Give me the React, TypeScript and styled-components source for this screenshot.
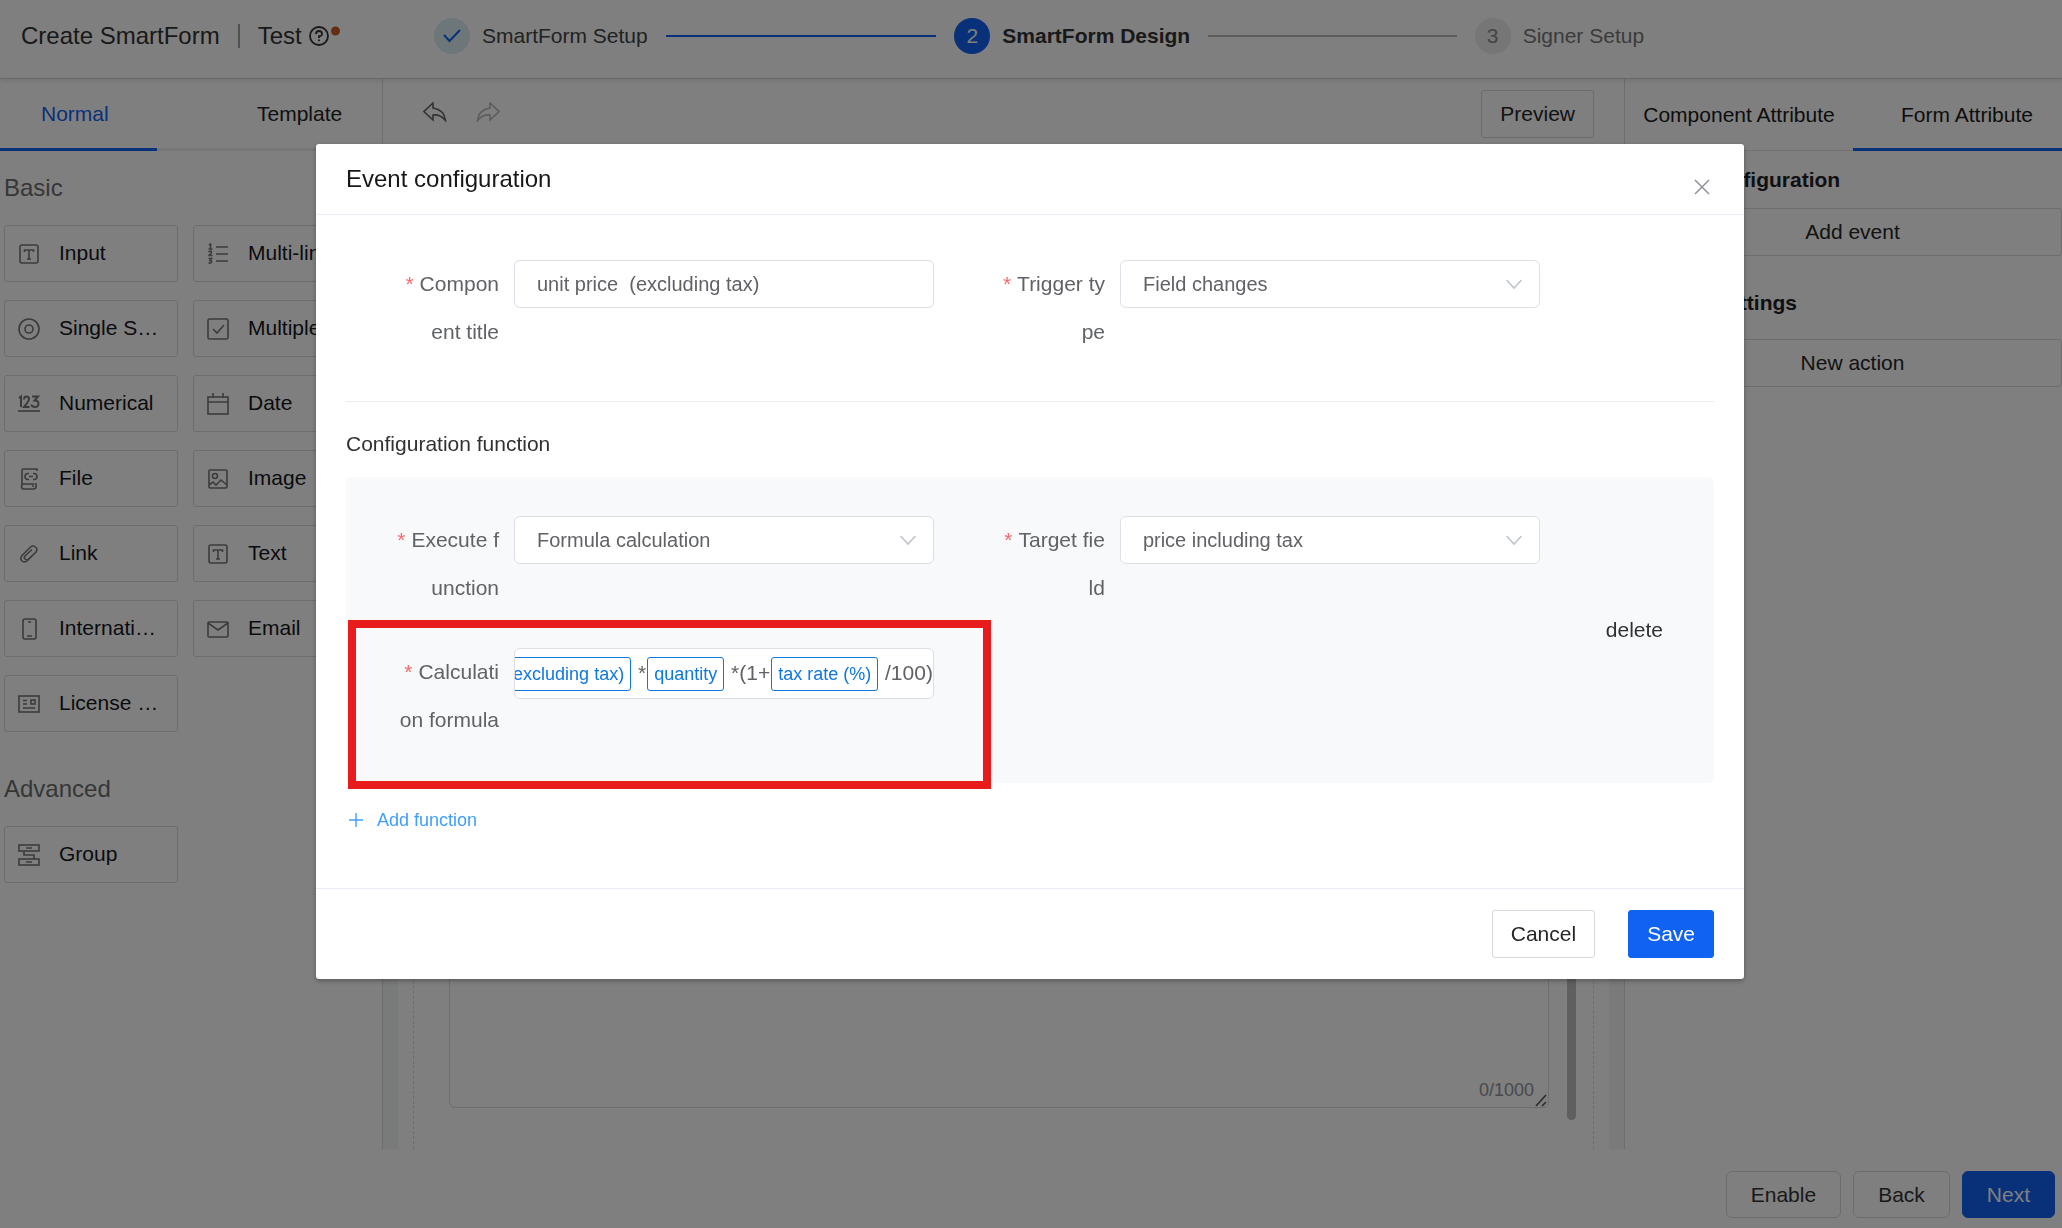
import React from "react";
import styled, { createGlobalStyle } from "styled-components";

const GlobalStyle = createGlobalStyle`
  *, *::before, *::after { box-sizing: border-box; }
  body {
    margin: 0;
    background: #fff;
    color: #1f2126;
    font-family: "Liberation Sans", Arial, sans-serif;
    font-size: 21px;
    overflow: hidden;
  }
  button, input, select, textarea { font: inherit; color: inherit; margin: 0; }
  h1, h2, h3, p { margin: 0; font-weight: 400; }
`;

const Page = styled.div`
  display: flex;
  flex-direction: column;
  height: 100vh;
  overflow: hidden;
`;

/* ---------- header ---------- */
const Header = styled.header`
  display: flex;
  align-items: center;
  height: 79px;
  padding-bottom: 6px;
  border-bottom: 1px solid #cfcfcf;
  box-shadow: 0 2px 6px rgba(0, 0, 0, 0.1);
  flex: none;
  position: relative;
`;

const Brand = styled.div`
  display: flex;
  align-items: center;
  width: 434px;
  padding-left: 21px;
  font-size: 24px;
  line-height: 28px;
  color: #333;
`;

const BrandTitle = styled.h1`
  font-size: 24px;
`;

const BrandDivider = styled.span`
  width: 2px;
  height: 24px;
  margin: 0 18px;
  background: #a0a0a0;
`;

const Help = styled.button`
  display: flex;
  margin-left: 6px;
  padding: 0;
  border: 0;
  background: none;
  color: #333;
`;

const Steps = styled.ol`
  display: grid;
  grid-template-columns: repeat(3, 1fr);
  flex: 1;
  margin: 0;
  padding: 0 67px 0 0;
  list-style: none;
`;

type StepState = "done" | "active" | "wait";

const stepColors = {
  done: { bg: "#dbeff5", fg: "#1062f2", text: "#444", line: "#1062f2" },
  active: { bg: "#1062f2", fg: "#fff", text: "#333", line: "#b8b8b8" },
  wait: { bg: "#ececec", fg: "#8a8a8a", text: "#777", line: "transparent" },
};

const StepItem = styled.li<{ $state: StepState }>`
  display: flex;
  align-items: center;
  min-width: 0;
  white-space: nowrap;
  color: ${(p) => stepColors[p.$state].text};
  font-weight: ${(p) => (p.$state === "active" ? 700 : 400)};
  &::after {
    content: "";
    flex: 1;
    height: 2px;
    margin: 0 18px;
    background: ${(p) => stepColors[p.$state].line};
  }
`;

const StepCircle = styled.span<{ $state: StepState }>`
  display: flex;
  align-items: center;
  justify-content: center;
  width: 36px;
  height: 36px;
  margin-right: 12px;
  border-radius: 50%;
  font-weight: 400;
  background: ${(p) => stepColors[p.$state].bg};
  color: ${(p) => stepColors[p.$state].fg};
`;

/* ---------- workspace ---------- */
const Workspace = styled.div`
  display: flex;
  flex: 1;
  min-height: 0;
`;

const Sidebar = styled.aside`
  width: 383px;
  flex: none;
  border-right: 1px solid #dcdcdc;
`;

const TabBar = styled.div`
  display: flex;
  height: 72px;
  overflow: hidden;
`;

const LeftTab = styled.button<{ $active?: boolean }>`
  flex: ${(p) => (p.$active ? "0 0 157px" : "1")};
  padding: 1px 0 0 ${(p) => (p.$active ? "41px" : "100px")};
  text-align: left;
  border: 0;
  border-bottom: 3px solid ${(p) => (p.$active ? "#1062f2" : "#ececec")};
  background: none;
  color: ${(p) => (p.$active ? "#1062f2" : "#222")};
`;

const Palette = styled.section`
  padding: 23px 15px 20px 4px;
`;

const PaletteTitle = styled.h2`
  margin-bottom: 23px;
  font-size: 24px;
  line-height: 28px;
  color: #6b6f6e;
`;

const PaletteGrid = styled.div`
  display: grid;
  grid-template-columns: 1fr 1fr;
  gap: 18px 15px;
`;

const PaletteCard = styled.button`
  display: flex;
  align-items: center;
  gap: 19px;
  min-width: 0;
  height: 57px;
  padding: 0 14px 0 13px;
  border: 1px solid #dadada;
  border-radius: 3px;
  background: #fff;
  color: #15171c;
  text-align: left;
  svg { flex: none; color: #777; }
`;

const CardLabel = styled.span`
  padding-bottom: 2px;
  overflow: hidden;
  text-overflow: ellipsis;
  white-space: nowrap;
`;

const Center = styled.main`
  display: flex;
  flex-direction: column;
  flex: 1;
  min-width: 0;
`;

const Toolbar = styled.div`
  display: flex;
  align-items: center;
  height: 70px;
  padding: 0 30px 0 40px;
`;

const ToolButton = styled.button<{ $dim?: boolean }>`
  display: flex;
  margin-right: 29px;
  padding: 0 0 4px;
  border: 0;
  background: none;
  color: ${(p) => (p.$dim ? "#b8b8b8" : "#666")};
`;

const PlainButton = styled.button<{ $push?: boolean }>`
  height: 48px;
  margin-left: ${(p) => (p.$push ? "auto" : "0")};
  padding: 0 18px;
  border: 1px solid #d6d9e0;
  border-radius: 3px;
  background: #fff;
  color: #262626;
`;

const PrimaryButton = styled(PlainButton)`
  border-color: #1062f2;
  background: #1062f2;
  color: #fff;
`;

const Canvas = styled.div`
  display: flex;
  flex: 1;
  min-height: 0;
  padding: 0 15px;
  background: #f1f6f4;
`;

const Sheet = styled.div`
  display: flex;
  flex: 1;
  padding: 0 15px;
  background: #fff;
`;

const DropZone = styled.div`
  display: flex;
  flex: 1;
  gap: 18px;
  padding: 0 17px 0 35px;
  border: dashed #dadada;
  border-width: 0 1px;
`;

const TextAreaWrap = styled.label`
  position: relative;
  flex: 1;
  margin-bottom: 41px;
`;

const TextArea = styled.textarea`
  display: block;
  width: 100%;
  height: 100%;
  resize: none;
  border: 1px solid #dcdcdc;
  border-radius: 6px;
  background: #fff;
`;

const Counter = styled.span`
  position: absolute;
  right: 15px;
  bottom: 8px;
  font-size: 18px;
  line-height: 20px;
  color: #909399;
`;

const Grip = styled.svg`
  position: absolute;
  right: 1px;
  bottom: 1px;
`;

const ScrollThumb = styled.div`
  width: 9px;
  margin-bottom: 29px;
  border-radius: 5px;
  background: #bdbfc3;
`;

const Attributes = styled.aside`
  width: 438px;
  flex: none;
  border-left: 1px solid #dcdcdc;
  overflow: hidden;
`;

const RightTab = styled.button<{ $active?: boolean }>`
  flex: 0 0 228px;
  padding: ${(p) => (p.$active ? "3px" : "1px")} 0 0;
  border: 0;
  border-bottom: ${(p) => (p.$active ? "3px solid #1062f2" : "1px solid #e4e4e4")};
  background: none;
  color: #1a1a1a;
`;

const AttributeGroup = styled.section<{ $wide?: boolean }>`
  display: flex;
  flex-direction: column;
  gap: ${(p) => (p.$wide ? "21px" : "13px")};
  padding: ${(p) => (p.$wide ? "32px" : "14px")} 0 0 18px;
`;

const AttributeTitle = styled.h3`
  font-size: 21px;
  line-height: 30px;
  font-weight: 700;
`;

const Footer = styled.footer`
  display: flex;
  justify-content: flex-end;
  gap: 12px;
  flex: none;
  padding: 21px 7px 10px;
  border-top: 1px solid #fafafa;
`;

const FooterButton = styled.button<{ $primary?: boolean }>`
  height: 47px;
  padding: 0 24px;
  border: 1px solid ${(p) => (p.$primary ? "#1062f2" : "#d9d9d9")};
  border-radius: 6px;
  background: ${(p) => (p.$primary ? "#1062f2" : "#fff")};
  color: ${(p) => (p.$primary ? "#fff" : "#333")};
`;

/* ---------- dialog ---------- */
const Backdrop = styled.div`
  position: fixed;
  inset: 0;
  padding: 144px 32px 0 30px;
  background: rgba(0, 0, 0, 0.5);
  overflow: auto;
`;

const Dialog = styled.div`
  max-width: 1428px;
  margin: 0 auto;
  border-radius: 3px;
  background: #fff;
  box-shadow: 0 2px 5px rgba(0, 0, 0, 0.3);
`;

const DialogHeader = styled.div`
  display: flex;
  align-items: center;
  justify-content: space-between;
  height: 71px;
  padding: 0 32px 0 30px;
  border-bottom: 1px solid #e8eef4;
`;

const DialogTitle = styled.h2`
  font-size: 24px;
  color: #17181a;
`;

const CloseButton = styled.button`
  display: flex;
  padding: 16px 0 0;
  border: 0;
  background: none;
  color: #909399;
`;

const DialogBody = styled.div`
  padding: 45px 30px 56px;
`;

const FieldGrid = styled.div`
  display: grid;
  grid-template-columns: 1fr 1fr;
  gap: 36px 66px;
  flex: 1;
`;

const TriggerFields = styled.div`
  display: flex;
  padding: 0 174px 45px 48px;
  border-bottom: 1px solid #ebedf0;
`;

const Field = styled.div`
  position: relative;
  display: flex;
  align-items: flex-start;
  min-width: 0;
`;

const FieldLabel = styled.label`
  flex: 0 0 120px;
  padding-right: 15px;
  line-height: 48px;
  text-align: right;
  word-break: break-all;
  color: #606266;
  &::before {
    content: "*";
    margin-right: 6px;
    color: #f56c6c;
  }
`;

const TextInput = styled.input`
  flex: 1;
  min-width: 0;
  height: 48px;
  padding: 0 22px;
  border: 1px solid #dcdfe6;
  border-radius: 6px;
  background: #fff;
  font-size: 20px;
  color: #606266;
`;

const SelectWrap = styled.div`
  position: relative;
  display: flex;
  flex: 1;
  min-width: 0;
`;

const SelectBox = styled.select`
  width: 100%;
  height: 48px;
  padding: 0 44px 0 22px;
  appearance: none;
  border: 1px solid #dcdfe6;
  border-radius: 6px;
  background: #fff;
  font-size: 20px;
  color: #606266;
`;

const Chevron = styled.svg`
  position: absolute;
  right: 17px;
  top: 19px;
  pointer-events: none;
`;

const SectionTitle = styled.h3`
  margin: 30px 0 21px;
  font-size: 21px;
  line-height: 24px;
  color: #303133;
`;

const FunctionPanel = styled.div`
  display: flex;
  align-items: center;
  gap: 66px;
  padding: 39px 51px 39px 48px;
  border-radius: 6px;
  background: #f8f9fb;
`;

const DeleteButton = styled.button`
  padding: 0;
  border: 0;
  background: none;
  color: #303133;
`;

const FormulaBox = styled.div`
  display: flex;
  align-items: center;
  justify-content: flex-end;
  flex: 1;
  min-width: 0;
  height: 51px;
  border: 1px solid #dcdfe6;
  border-radius: 6px;
  background: #fff;
  color: #606266;
  white-space: pre;
  overflow: hidden;
`;

const Operator = styled.span`
  padding-bottom: 2px;
`;

const Token = styled.span`
  flex: none;
  height: 34px;
  margin: 0 1px;
  padding: 0 6px;
  border: 1px solid #0e78e0;
  border-radius: 3px;
  font-size: 18px;
  line-height: 32px;
  color: #0e78e0;
`;

const Highlight = styled.div`
  position: absolute;
  inset: -28px -57px -45px -46px;
  border: 8px solid #e81c1c;
  pointer-events: none;
`;

const AddFunction = styled.button`
  display: flex;
  align-items: center;
  gap: 14px;
  margin-top: 25px;
  padding: 0 0 0 3px;
  border: 0;
  background: none;
  font-size: 18px;
  line-height: 24px;
  color: #409eff;
`;

const DialogFooter = styled.div`
  display: flex;
  justify-content: flex-end;
  gap: 33px;
  padding: 21px 30px;
  border-top: 1px solid #e6ebf5;
`;

/* ---------- icons ---------- */
const icons: Record<string, React.ReactNode> = {
  text: (
    <>
      <rect x="2" y="2" width="18" height="18" rx="2" />
      <path d="M6.500 9V7h9v2M11 7v9M9 16h4" />
    </>
  ),
  list: (
    <>
      <path d="M9 4h12M9 11h12M9 18h12" />
      <path d="M2 2l1.500-1v5M1.500 6h4M1.500 9q3-2 3 0t-3 3.500h4M1.500 15.500h3l-1.500 2q2 0 1.500 1.500t-3 1" />
    </>
  ),
  radio: (
    <>
      <circle cx="11" cy="11" r="10" />
      <circle cx="11" cy="11" r="4" />
    </>
  ),
  check: (
    <>
      <rect x="1" y="1" width="20" height="20" rx="1.500" />
      <path d="M6 11l4 4 7-8" />
    </>
  ),
  number: (
    <>
      <path d="M1 5l2-1.500V14M6 6.500q0-3 2.500-3T11 6q0 2-5 8h5.500M14 3.500h6l-3.500 4q4 0 4 3.300t-3.500 3.200-3.500-2.500" strokeWidth="2" />
      <path d="M0 18h22" />
    </>
  ),
  date: (
    <>
      <rect x="1" y="4" width="20" height="17" />
      <path d="M1 9h20M6 0v5M16 0v5" />
    </>
  ),
  file: (
    <>
      <path d="M4 16V2.500Q4 1 5.500 1H19v2M18 15v3.500q0 2.500-2.500 2.500H6q-2.500 0-2.500-2.500T6 16h10.500M14 18h2" />
      <path d="M11 5.500H10a3 3 0 000 6h1M15 5.500h1a3 3 0 010 6h-1M11 8.500h4" />
    </>
  ),
  image: (
    <>
      <rect x="2" y="2" width="18" height="18" rx="1" />
      <circle cx="8" cy="8" r="2.500" />
      <path d="M2 17l4-3 3 3 5-5 6 5" />
    </>
  ),
  link: <path d="M17 10l-7.500 7.500q-3 2.500-5.500.5t0-5.500L12.500 4q2.500-2 5 0t.5 5l-8 7.500q-1.500 1-3-.500t0-3L14 6.500" />,
  phone: (
    <>
      <rect x="5" y="1" width="13" height="20" rx="2" />
      <path d="M10 4h3M9 18h5" />
    </>
  ),
  mail: (
    <>
      <rect x="1" y="4" width="20" height="15" rx="1" />
      <path d="M1 5l10 7 10-7" />
    </>
  ),
  card: (
    <>
      <rect x="1" y="3" width="20" height="16" />
      <rect x="13" y="7" width="4" height="4" />
      <path d="M5 7.500h4M5 11h4M5 15h12" />
    </>
  ),
  group: (
    <>
      <rect x="1" y="1" width="20" height="6" />
      <rect x="1" y="15" width="20" height="6" />
      <path d="M8 4h6M8 18h6M6 7v4h10v4" />
    </>
  ),
};

const Icon = ({ name }: { name: string }) => (
  <svg width="22" height="22" viewBox="0 0 22 22" fill="none" stroke="currentColor" strokeWidth="1.6" aria-hidden="true">
    {icons[name]}
  </svg>
);

const basicItems = [
  ["text", "Input"],
  ["list", "Multi-line"],
  ["radio", "Single Selection"],
  ["check", "Multiple"],
  ["number", "Numerical"],
  ["date", "Date"],
  ["file", "File"],
  ["image", "Image"],
  ["link", "Link"],
  ["text", "Text"],
  ["phone", "International"],
  ["mail", "Email"],
  ["card", "License plate"],
];

const PaletteSection = ({ title, items }: { title: string; items: string[][] }) => (
  <Palette>
    <PaletteTitle>{title}</PaletteTitle>
    <PaletteGrid>
      {items.map(([icon, label]) => (
        <PaletteCard key={label} type="button">
          <Icon name={icon} />
          <CardLabel>{label}</CardLabel>
        </PaletteCard>
      ))}
    </PaletteGrid>
  </Palette>
);

const SelectField = ({ id, label, value }: { id: string; label: string; value: string }) => (
  <Field>
    <FieldLabel htmlFor={id}>{label}</FieldLabel>
    <SelectWrap>
      <SelectBox id={id} defaultValue={value}>
        <option>{value}</option>
      </SelectBox>
      <Chevron width="18" height="11" viewBox="0 0 18 11" fill="none" stroke="#c0c4cc" strokeWidth="1.6" aria-hidden="true">
        <path d="M1.500 1l7.500 8 7.500-8" />
      </Chevron>
    </SelectWrap>
  </Field>
);

export default function App() {
  return (
    <>
      <GlobalStyle />
      <Page>
        <Header>
          <Brand>
            <BrandTitle>Create SmartForm</BrandTitle>
            <BrandDivider />
            <span>Test</span>
            <Help type="button" aria-label="Help">
              <svg width="33" height="22" viewBox="0 0 33 22" fill="none" stroke="currentColor" strokeWidth="1.8">
                <circle cx="11" cy="11" r="9" />
                <path d="M8 9q0-3 3-3t3 2.700-3 2.500v1.800M11 14.500v1.800" />
                <circle cx="27.500" cy="6" r="4.500" fill="#c4601c" stroke="none" />
              </svg>
            </Help>
          </Brand>
          <Steps>
            <StepItem $state="done">
              <StepCircle $state="done">
                <svg width="18" height="14" viewBox="0 0 18 14" fill="none" stroke="currentColor" strokeWidth="2" aria-label="Done">
                  <path d="M1 6l5.500 6L17 1" />
                </svg>
              </StepCircle>
              SmartForm Setup
            </StepItem>
            <StepItem $state="active">
              <StepCircle $state="active">2</StepCircle>
              SmartForm Design
            </StepItem>
            <StepItem $state="wait">
              <StepCircle $state="wait">3</StepCircle>
              Signer Setup
            </StepItem>
          </Steps>
        </Header>

        <Workspace>
          <Sidebar>
            <TabBar>
              <LeftTab type="button" $active>Normal</LeftTab>
              <LeftTab type="button">Template</LeftTab>
            </TabBar>
            <PaletteSection title="Basic" items={basicItems} />
            <PaletteSection title="Advanced" items={[["group", "Group"]]} />
          </Sidebar>

          <Center>
            <Toolbar>
              <ToolButton type="button" aria-label="Undo">
                <svg width="24" height="20" viewBox="0 0 24 20" fill="none" stroke="currentColor" strokeWidth="1.6">
                  <path d="M10 1L1 9.500l9 8.500v-5q7-1 12.500 5.500Q21.500 8 10 6z" />
                </svg>
              </ToolButton>
              <ToolButton type="button" aria-label="Redo" $dim>
                <svg width="24" height="20" viewBox="0 0 24 20" fill="none" stroke="currentColor" strokeWidth="1.6">
                  <path d="M14 1l9 8.500-9 8.500v-5q-7-1-12.500 5.500Q2.500 8 14 6z" />
                </svg>
              </ToolButton>
              <PlainButton type="button" $push>Preview</PlainButton>
            </Toolbar>
            <Canvas>
              <Sheet>
                <DropZone>
                  <TextAreaWrap>
                    <TextArea aria-label="Multi-line text" />
                    <Counter>0/1000</Counter>
                    <Grip width="13" height="13" viewBox="0 0 13 13" fill="none" stroke="#555" strokeWidth="1.6" aria-hidden="true">
                      <path d="M1 12L11 1M7 12l4-4" />
                    </Grip>
                  </TextAreaWrap>
                  <ScrollThumb />
                </DropZone>
              </Sheet>
            </Canvas>
          </Center>

          <Attributes>
            <TabBar>
              <RightTab type="button">Component Attribute</RightTab>
              <RightTab type="button" $active>Form Attribute</RightTab>
            </TabBar>
            <AttributeGroup>
              <AttributeTitle>Event configuration</AttributeTitle>
              <PlainButton type="button">Add event</PlainButton>
            </AttributeGroup>
            <AttributeGroup $wide>
              <AttributeTitle>Button settings</AttributeTitle>
              <PlainButton type="button">New action</PlainButton>
            </AttributeGroup>
          </Attributes>
        </Workspace>

        <Footer>
          <FooterButton type="button">Enable</FooterButton>
          <FooterButton type="button">Back</FooterButton>
          <FooterButton type="button" $primary>Next</FooterButton>
        </Footer>
      </Page>

      <Backdrop>
        <Dialog role="dialog" aria-modal="true" aria-labelledby="dialog-title">
          <DialogHeader>
            <DialogTitle id="dialog-title">Event configuration</DialogTitle>
            <CloseButton type="button" aria-label="Close">
              <svg width="20" height="20" viewBox="0 0 20 20" fill="none" stroke="currentColor" strokeWidth="1.5">
                <path d="M3 3l14 14M17 3L3 17" />
              </svg>
            </CloseButton>
          </DialogHeader>

          <DialogBody>
            <TriggerFields>
              <FieldGrid>
                <Field>
                  <FieldLabel htmlFor="component-title">Component title</FieldLabel>
                  <TextInput id="component-title" defaultValue="unit price  (excluding tax)" />
                </Field>
                <SelectField id="trigger-type" label="Trigger type" value="Field changes" />
              </FieldGrid>
            </TriggerFields>

            <SectionTitle>Configuration function</SectionTitle>
            <FunctionPanel>
              <FieldGrid>
                <SelectField id="execute-function" label="Execute function" value="Formula calculation" />
                <SelectField id="target-field" label="Target field" value="price including tax" />
                <Field>
                  <FieldLabel id="formula-label">Calculation formula</FieldLabel>
                  <FormulaBox role="textbox" aria-labelledby="formula-label" tabIndex={0}>
                    <Token>unit price  (excluding tax)</Token>
                    <Operator> *</Operator>
                    <Token>quantity</Token>
                    <Operator> *(1+</Operator>
                    <Token>tax rate (%)</Token>
                    <Operator> /100)</Operator>
                  </FormulaBox>
                  <Highlight />
                </Field>
              </FieldGrid>
              <DeleteButton type="button">delete</DeleteButton>
            </FunctionPanel>

            <AddFunction type="button">
              <svg width="14" height="16" viewBox="0 0 14 16" fill="none" stroke="currentColor" strokeWidth="1.4" aria-hidden="true">
                <path d="M7 1v14M0 8h14" />
              </svg>
              Add function
            </AddFunction>
          </DialogBody>

          <DialogFooter>
            <PlainButton type="button">Cancel</PlainButton>
            <PrimaryButton type="button">Save</PrimaryButton>
          </DialogFooter>
        </Dialog>
      </Backdrop>
    </>
  );
}
